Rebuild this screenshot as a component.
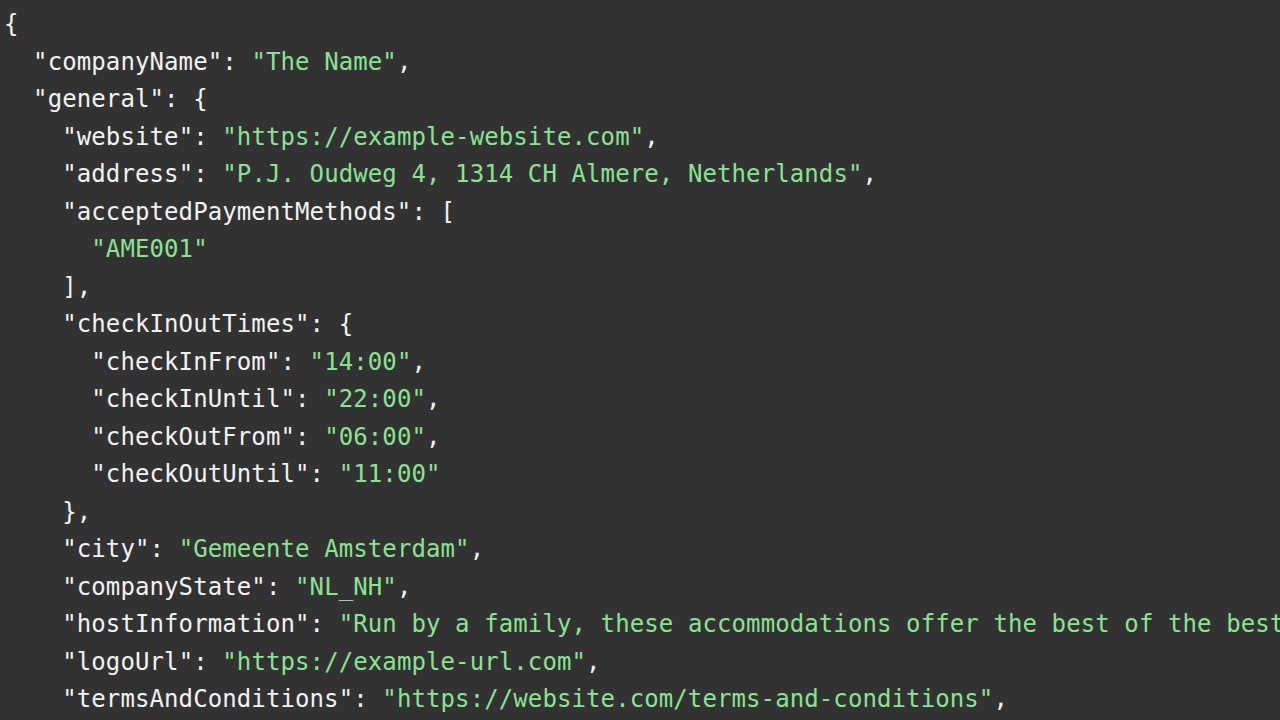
import React from 'react'

// each line: [indent, key, value, tail]
const lines = [
  [0, null, null, '{'],
  [1, 'companyName', 'The Name', ','],
  [1, 'general', null, ' {'],
  [2, 'website', 'https://example-website.com', ','],
  [2, 'address', 'P.J. Oudweg 4, 1314 CH Almere, Netherlands', ','],
  [2, 'acceptedPaymentMethods', null, ' ['],
  [3, null, 'AME001', ''],
  [2, null, null, '],'],
  [2, 'checkInOutTimes', null, ' {'],
  [3, 'checkInFrom', '14:00', ','],
  [3, 'checkInUntil', '22:00', ','],
  [3, 'checkOutFrom', '06:00', ','],
  [3, 'checkOutUntil', '11:00', ''],
  [2, null, null, '},'],
  [2, 'city', 'Gemeente Amsterdam', ','],
  [2, 'companyState', 'NL_NH', ','],
  [2, 'hostInformation', 'Run by a family, these accommodations offer the best of the best in comfort and style', ','],
  [2, 'logoUrl', 'https://example-url.com', ','],
  [2, 'termsAndConditions', 'https://website.com/terms-and-conditions', ','],
  [2, 'currency', 'EUR', ','],
]

const Line = ({ indent, k, v, tail }) => (
  <div className="whitespace-pre">
    {'  '.repeat(indent)}
    {k && <span className="text-[#f2f2f2]">"{k}":{v !== null ? ' ' : ''}</span>}
    {v !== null && <span className="text-[#8ae391]">"{v}"</span>}
    <span className="text-[#f2f2f2]">{tail}</span>
  </div>
)

export default function App() {
  return (
    <div className="w-[1280px] h-[720px] overflow-hidden bg-[#323232] pl-[4px] pt-[6px] text-[24px] leading-[37.5px] tracking-[0.1px] font-['DejaVu_Sans_Mono',monospace] text-[#f2f2f2]">
      {lines.map(([indent, k, v, tail], i) => (
        <Line key={i} indent={indent} k={k} v={v} tail={tail} />
      ))}
    </div>
  )
}
